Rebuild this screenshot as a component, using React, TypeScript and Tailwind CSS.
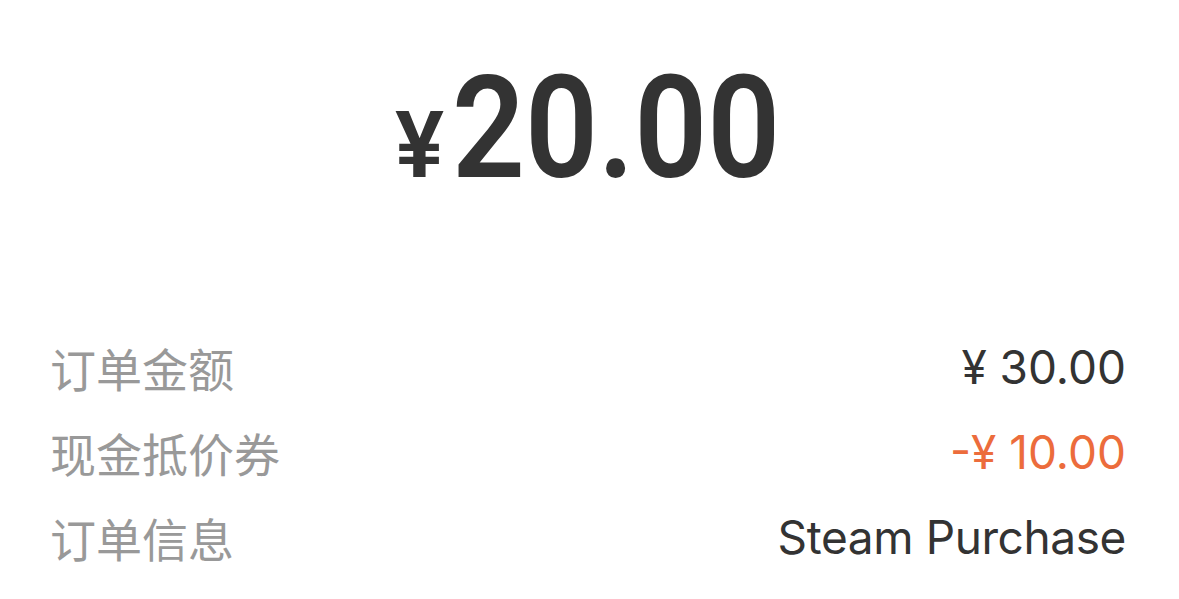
import React from "react";

const rows = [
  { label: "订单金额", value: "¥ 30.00", color: "text-[#333333]" },
  { label: "现金抵价券", value: "-¥ 10.00", color: "text-[#ec6c3c]" },
  { label: "订单信息", value: "Steam Purchase", color: "text-[#333333] tracking-[-0.4px]" },
];

const App = () => {
  return (
    <div className="min-h-[599px] w-full bg-white font-['Inter','Noto_Sans_CJK_SC',sans-serif]">
      <div className="flex items-baseline justify-center pr-[3px] pt-[58px] text-[#333333] font-['Roboto',sans-serif] font-semibold leading-none">
        <span className="mr-[8px] text-[92px]">¥</span>
        <span className="mr-[-36px] inline-block origin-left scale-x-[0.9] text-[142px]">20.00</span>
      </div>

      <div className="mt-[124px] pl-[50px] pr-[53px]">
        {rows.map((row) => (
          <div
            key={row.label}
            className="flex h-[85px] items-center justify-between text-[46px] leading-none"
          >
            <span className="text-[#999999] font-['Noto_Sans_CJK_SC',sans-serif]">
              {row.label}
            </span>
            <span className={row.color}>{row.value}</span>
          </div>
        ))}
      </div>
    </div>
  );
};

export default App;
